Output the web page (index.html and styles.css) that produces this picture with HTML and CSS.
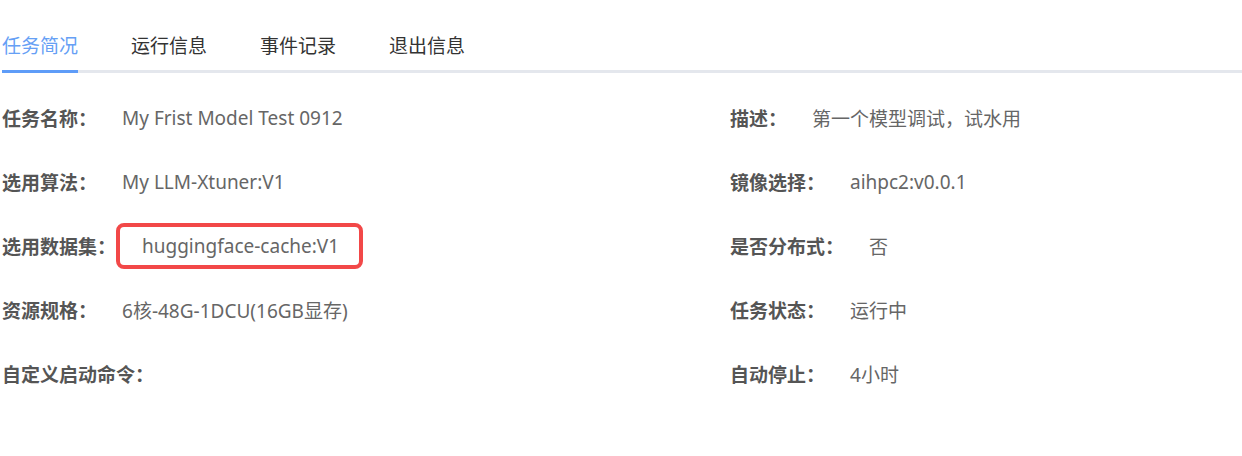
FILE: index.html
```html
<!DOCTYPE html>
<html lang="zh-CN">
  <head>
    <meta charset="UTF-8" />
    <meta name="viewport" content="width=device-width, initial-scale=1.0" />
    <title>任务简况</title>
    <link rel="stylesheet" href="styles.css">
  </head>
  <body>
    <div class="tabs">
      <div class="tab active">任务简况</div>
      <div class="tab">运行信息</div>
      <div class="tab">事件记录</div>
      <div class="tab">退出信息</div>
    </div>
    <!-- Task overview -->
    <div class="info-grid">
      <div class="info-item">
        <span class="label">任务名称：</span>
        <span class="value">My Frist Model Test 0912</span>
      </div>
      <div class="info-item">
        <span class="label">描述：</span>
        <span class="value">第一个模型调试，试水用</span>
      </div>
      <div class="info-item">
        <span class="label">选用算法：</span>
        <span class="value">My LLM-Xtuner:V1</span>
      </div>
      <div class="info-item">
        <span class="label">镜像选择：</span>
        <span class="value">aihpc2:v0.0.1</span>
      </div>
      <div class="info-item">
        <span class="label">选用数据集：</span>
        <span class="value highlight">huggingface-cache:V1</span>
      </div>
      <div class="info-item">
        <span class="label">是否分布式：</span>
        <span class="value">否</span>
      </div>
      <div class="info-item">
        <span class="label">资源规格：</span>
        <span class="value">6核-48G-1DCU(16GB显存)</span>
      </div>
      <div class="info-item">
        <span class="label">任务状态：</span>
        <span class="value">运行中</span>
      </div>
      <div class="info-item">
        <span class="label">自定义启动命令：</span>
        <span class="value"></span>
      </div>
      <div class="info-item">
        <span class="label">自动停止：</span>
        <span class="value">4小时</span>
      </div>
    </div>
  </body>
</html>
```

FILE: styles.css
```css
body {
  font-family: "Noto Sans", "Noto Sans CJK SC", sans-serif;
  font-size: 19px;
  color: #666;
  margin: 0;
  padding: 26px 0 0 2px;
}
.tabs {
  display: flex;
  gap: 53px;
  border-bottom: 3px solid #e4e7ed;
}
.tab {
  line-height: 40px;
  padding-bottom: 4px;
  color: #333;
  cursor: pointer;
}
.tab.active {
  color: #66a0f5;
  border-bottom: 3px solid #5e9cf8;
  margin-bottom: -3px;
}
.info-grid {
  display: grid;
  grid-template-columns: 728px 1fr;
  grid-auto-rows: 64px;
  margin-top: 13px;
}
.info-item {
  display: flex;
  align-items: center;
}
.label {
  font-weight: bold;
  color: #555;
  margin-right: 25px;
}
.value {
  color: #666;
}
.value.highlight {
  border: 4px solid #f24848;
  border-radius: 8px;
  padding: 6px 20px 6px 22px;
  margin-left: -25px;
}
```
